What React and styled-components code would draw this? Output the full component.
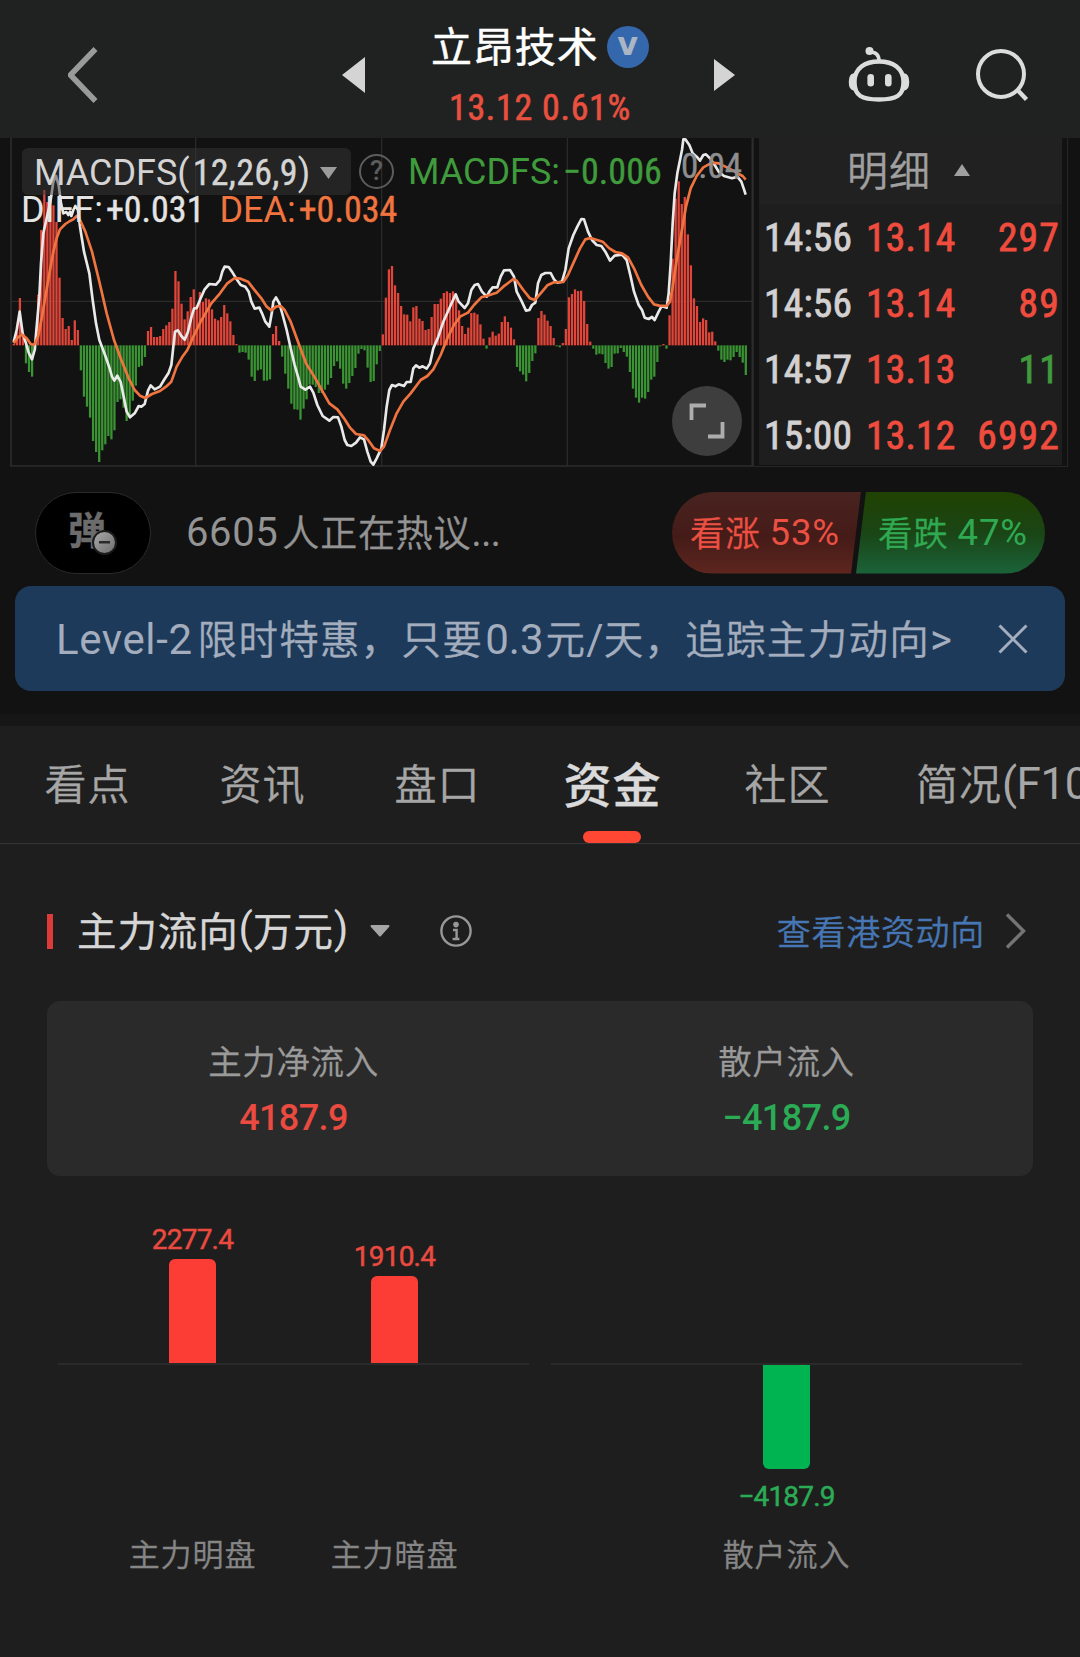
import React from 'react';
import styled, { createGlobalStyle } from 'styled-components';

const RED = '#f04c3e';
const GREEN = '#3f9b3c';

// histogram of the MACD, one value per minute
const histogram = [
    4, 40, 142, 30, -54, -80, -94, -15, 152, 346, 466, 430, 445, 420, 370, 203, 82, 49, 58, 16,
    75, 46, -75, -154, -184, -217, -287, -320, -350, -315, -297, -272, -282, -255, -170, -162, -187, -227, -212, -166,
    -121, -65, -61, -35, 43, 55, 25, 25, 28, 49, 60, 70, 110, 223, 192, 125, 78, 102, 145, 168,
    120, 160, 130, 141, 138, 108, 80, 75, 85, 121, 96, 72, 31, 4, -22, -20, -22, -43, -94, -107,
    -75, -72, -106, -106, -102, 34, 58, 13, -34, -85, -130, -175, -192, -193, -223, -190, -162, -118, -118, -125,
    -143, -143, -133, -118, -98, -62, -48, -70, -115, -130, -113, -92, -68, -25, -11, -15, -67, -110, -107, -57,
    -17, 33, 143, 228, 238, 180, 157, 118, 93, 92, 72, 114, 118, 80, 73, 46, 49, 85, 124, 124,
    140, 157, 162, 157, 162, 150, 105, 58, 34, 53, 97, 98, 93, 63, 20, -10, 24, 41, 29, 35,
    70, 87, 70, 53, 18, -65, -78, -88, -108, -83, -47, -24, 82, 103, 92, 74, 58, 22, -3, -6,
    7, 49, 144, 154, 168, 163, 164, 133, 64, 11, -10, -28, -25, -27, -53, -70, -65, -25, -24, -8,
    -20, -34, -80, -130, -157, -172, -157, -160, -140, -103, -94, -50, -3, 4, -10, 90, 260, 440, 492, 424,
    445, 333, 240, 141, 118, 70, 81, 76, 39, 41, 12, -16, -43, -50, -43, -45, -35, -20, -35, -52,
    -89,
];

const diffLine = '41,636 50,600 59,545 68,610 78,640 86,668 96,688 104,660 110,590 118,500 123,400 130,310 140,265 152,210 160,155 168,138 176,165 183,220 190,250 199,246 205,255 210,245 214,258 220,240 226,228 234,240 240,290 252,365 268,430 278,510 288,580 298,630 314,672 328,712 336,740 343,752 352,737 362,756 372,805 380,845 390,862 404,850 416,828 424,830 434,822 444,782 452,766 464,778 480,770 492,750 506,728 514,705 520,650 525,605 534,601 544,618 554,629 564,605 574,562 582,536 590,534 602,505 614,478 628,462 648,464 660,450 667,425 674,410 686,411 696,425 710,448 722,465 736,470 746,485 754,515 764,536 778,533 786,550 796,575 808,590 816,545 820,515 828,502 838,520 848,555 860,600 872,655 884,705 894,740 902,770 916,779 930,770 940,788 952,825 968,858 988,872 1000,861 1014,862 1024,890 1034,930 1042,945 1054,948 1068,938 1080,922 1092,928 1102,965 1112,995 1120,1004 1130,985 1144,955 1152,900 1160,830 1168,780 1176,765 1186,769 1196,763 1212,768 1220,756 1232,756 1240,715 1248,706 1258,713 1268,709 1280,716 1290,700 1300,655 1315,620 1330,575 1350,530 1367,493 1376,515 1394,534 1404,520 1414,480 1424,465 1434,462 1446,485 1460,500 1468,485 1478,472 1492,472 1502,440 1512,421 1530,420 1542,440 1550,485 1564,512 1578,542 1588,540 1596,525 1606,518 1614,460 1624,435 1636,429 1652,429 1662,448 1672,458 1686,455 1696,420 1706,355 1720,315 1732,290 1744,267 1752,268 1764,305 1776,330 1790,345 1804,348 1816,365 1830,392 1844,377 1866,374 1880,390 1892,440 1902,485 1916,525 1926,540 1934,563 1946,567 1956,561 1964,570 1976,545 1984,530 1992,530 2000,533 2006,490 2012,400 2018,280 2024,190 2032,130 2040,90 2046,60 2050,28 2056,28 2068,45 2078,70 2090,80 2100,92 2110,75 2118,73 2130,85 2144,105 2156,125 2172,138 2196,145 2212,140 2224,155 2232,178 2237,194';

const deaLine = '41,640 54,622 66,614 80,625 92,642 102,645 114,620 126,560 138,490 150,420 160,365 170,325 180,298 196,282 210,273 220,268 230,258 240,270 256,305 276,365 298,455 320,550 342,630 364,690 386,745 404,780 420,797 436,804 456,792 480,783 498,770 514,755 530,710 546,682 562,660 580,620 602,575 634,520 660,490 682,460 704,444 722,446 744,455 762,478 784,505 800,530 814,541 828,530 842,528 854,540 872,575 894,635 918,700 946,745 968,785 988,820 1012,838 1032,865 1050,893 1068,912 1092,916 1106,932 1122,955 1140,963 1152,950 1170,900 1190,850 1210,815 1232,790 1262,750 1282,738 1300,718 1322,675 1342,625 1362,585 1380,560 1404,548 1422,525 1444,502 1462,497 1490,488 1510,470 1540,447 1550,452 1570,480 1590,505 1604,510 1622,490 1642,466 1662,457 1690,456 1704,435 1722,395 1740,355 1756,328 1772,324 1808,335 1828,355 1846,366 1866,370 1884,382 1902,415 1924,465 1944,500 1962,523 1978,527 2000,528 2010,515 2018,470 2030,390 2044,310 2058,230 2072,175 2090,138 2110,112 2136,98 2156,100 2176,110 2200,122 2216,132 2228,138 2237,149';

const trades = [
    { time: '14:56', price: '13.14', volume: '297', color: RED },
    { time: '14:56', price: '13.14', volume: '89', color: RED },
    { time: '14:57', price: '13.13', volume: '11', color: GREEN },
    { time: '15:00', price: '13.12', volume: '6992', color: RED },
];

const tabs = ['看点', '资讯', '盘口', '资金', '社区'];

const Header = () => (
    <TopBar>
        <BackIcon width="30" height="56" viewBox="0 0 30 56">
            <path d="M27.5 2 L2.5 28 L27.5 54" fill="none" stroke="#9a9a9a" strokeWidth="5.6" />
        </BackIcon>
        <PrevIcon width="23" height="36" viewBox="0 0 23 36">
            <path d="M23 0 V36 L0 18 Z" fill="#d4d4d4" />
        </PrevIcon>
        <StockBlock>
            <StockName>立昂技术<Verified>v</Verified></StockName>
            <StockPrice>13.12 0.61%</StockPrice>
        </StockBlock>
        <NextIcon width="21" height="32" viewBox="0 0 21 32">
            <path d="M0 0 V32 L21 16 Z" fill="#d4d4d4" />
        </NextIcon>
        <RobotIcon width="62" height="58" viewBox="0 0 62 58">
            <path d="M31 15.5 C45 15.5 55.5 22 55.5 36 C55.5 50 48 53.5 31 53.5 C14 53.5 6.5 50 6.5 36 C6.5 22 17 15.5 31 15.5 Z" fill="none" stroke="#dcdcdc" strokeWidth="4.4" />
            <path d="M6 28 C0 29 0 43 6 44 Z M56 28 C62 29 62 43 56 44 Z" fill="#dcdcdc" stroke="#dcdcdc" strokeWidth="1.5" />
            <path d="M22 6 C28 6 31 9 31 15" fill="none" stroke="#dcdcdc" strokeWidth="3.6" />
            <circle cx="21.5" cy="5" r="4" fill="#dcdcdc" />
            <rect x="19.4" y="28" width="6.6" height="12.5" rx="3.3" fill="#dcdcdc" />
            <rect x="37" y="28" width="6.6" height="12.5" rx="3.3" fill="#dcdcdc" />
        </RobotIcon>
        <SearchIcon width="56" height="56" viewBox="0 0 56 56">
            <circle cx="27" cy="27" r="23" fill="none" stroke="#dcdcdc" strokeWidth="4" />
            <path d="M43.5 43 L52.5 52.5" stroke="#dcdcdc" strokeWidth="4.4" />
        </SearchIcon>
    </TopBar>
);

const MacdChart = () => (
    <ChartPane>
        <svg width="753" height="329" viewBox="0 24 2259 987">
            <g stroke="#2c2c2c">
                <path d="M33 24 V1008 M2257 24 V1008 M31 1008 H2259" strokeWidth="5" fill="none" />
                <path d="M587 24 V1008 M1145 24 V1008 M1702 24 V1008 M31 514 H2259" strokeWidth="3.5" fill="none" />
            </g>
            {histogram.map((v, i) => (
                <rect
                    key={i}
                    x={38 + i * 9.15}
                    y={v > 0 ? 646 - v : 646}
                    width="6.8"
                    height={Math.abs(v)}
                    fill={v > 0 ? '#e2463a' : '#3a9433'}
                />
            ))}
            <polyline points={diffLine} fill="none" stroke="#e9e9e9" strokeWidth="8" strokeLinejoin="round" />
            <polyline points={deaLine} fill="none" stroke="#f0743f" strokeWidth="8" strokeLinejoin="round" />
        </svg>
        <Legend>
            <IndicatorButton>
                <Latin>MACDFS(</Latin><Digits>12,26,9</Digits><Latin>)</Latin>
                <svg width="17" height="12" viewBox="0 0 17 12"><path d="M0 0 H17 L8.5 12 Z" fill="#9c9c9c" /></svg>
            </IndicatorButton>
            <Help>?</Help>
            <MacdValue><Latin>MACDFS:</Latin><Digits>−0.006</Digits></MacdValue>
        </Legend>
        <Values>
            <DiffValue><Latin>DIFF:</Latin><Digits>+0.031</Digits></DiffValue>
            <DeaValue><Latin>DEA:</Latin><Digits>+0.034</Digits></DeaValue>
        </Values>
        <MaxLabel>0.04</MaxLabel>
        <ExpandButton>
            <svg width="38" height="38" viewBox="0 0 38 38">
                <path d="M3.5 18 V3.5 H18 M20 34.5 H34.5 V20" fill="none" stroke="#adadad" strokeWidth="3.8" />
            </svg>
        </ExpandButton>
    </ChartPane>
);

const TradeList = () => (
    <TradePane>
        <TradeInner>
            <TradeHeader>
                明细
                <svg width="16" height="12" viewBox="0 0 16 12"><path d="M8 0 L16 12 H0 Z" fill="#a0a0a0" /></svg>
            </TradeHeader>
            {trades.map((t, i) => (
                <TradeRow key={i}>
                    <TradeTime>{t.time}</TradeTime>
                    <TradePrice>{t.price}</TradePrice>
                    <TradeVolume $color={t.color}>{t.volume}</TradeVolume>
                </TradeRow>
            ))}
        </TradeInner>
    </TradePane>
);

const FlowItem = ({ label, value, height, negative }) => (
    <FlowColumn>
        <FlowUp>
            {!negative && <><FlowValue $color="#ea4a3f">{value}</FlowValue><FlowBar style={{ height }} /></>}
        </FlowUp>
        <FlowDown>
            {negative && <><FlowBar $negative style={{ height }} /><FlowValue $color="#2bab55">{value}</FlowValue></>}
        </FlowDown>
        <FlowLabel>{label}</FlowLabel>
    </FlowColumn>
);

const App = () => {
    return (
        <>
            <GlobalStyle />
            <Page>
                <Header />
                <MarketRow>
                    <MacdChart />
                    <TradeList />
                </MarketRow>

                <DiscussRow>
                    <DanmuButton>
                        弹
                        <MinusDot />
                    </DanmuButton>
                    <DiscussText><Count>6605</Count>人正在热议<Dots>...</Dots></DiscussText>
                    <Poll>
                        <Bull>看涨<PollNumber>53%</PollNumber></Bull>
                        <Bear>看跌<PollNumber>47%</PollNumber></Bear>
                    </Poll>
                </DiscussRow>

                <Banner>
                    <BannerText>
                        <Level>Level-2</Level>限时特惠，只要<Price>0.3</Price>元<b>/</b>天，追踪主力动向<b>&gt;</b>
                    </BannerText>
                    <svg width="30" height="30" viewBox="0 0 30 30">
                        <path d="M1.5 1.5 L28.5 28.5 M28.5 1.5 L1.5 28.5" stroke="#a3adbd" strokeWidth="3" />
                    </svg>
                </Banner>

                <Content>
                    <TabBar>
                        {tabs.map(t => <Tab key={t} $active={t === '资金'}>{t}</Tab>)}
                        <Tab>简况<b>(F10)</b></Tab>
                    </TabBar>

                    <SectionHead>
                        <SectionTitle>主力流向<b>(</b>万元<b>)</b></SectionTitle>
                        <CaretIcon width="20" height="12" viewBox="0 0 20 12">
                            <path d="M1.5 1 H18.5 L10 10.5 Z" fill="#a5a5a5" stroke="#a5a5a5" strokeWidth="2" strokeLinejoin="round" />
                        </CaretIcon>
                        <svg width="32" height="32" viewBox="0 0 32 32">
                            <circle cx="16" cy="16" r="14.6" fill="none" stroke="#989898" strokeWidth="2.4" />
                            <circle cx="16" cy="9.6" r="2.8" fill="#989898" />
                            <path d="M13 15 H16.6 V24 M12.6 24 H19.4" fill="none" stroke="#989898" strokeWidth="2.4" />
                        </svg>
                        <SectionLink>查看港资动向</SectionLink>
                        <svg width="22" height="36" viewBox="0 0 22 36">
                            <path d="M2 1.5 L18.5 18 L2 34.5" fill="none" stroke="#747474" strokeWidth="3.4" />
                        </svg>
                    </SectionHead>

                    <Summary>
                        <SummaryItem>
                            主力净流入
                            <SummaryValue $color="#ea4a3f">4187.9</SummaryValue>
                        </SummaryItem>
                        <SummaryItem>
                            散户流入
                            <SummaryValue $color="#2bab55">−4187.9</SummaryValue>
                        </SummaryItem>
                    </Summary>

                    <FlowCharts>
                        <FlowGroup>
                            <FlowItem label="主力明盘" value="2277.4" height={104} />
                            <FlowItem label="主力暗盘" value="1910.4" height={87} />
                        </FlowGroup>
                        <FlowGroup>
                            <FlowItem label="散户流入" value="−4187.9" height={104} negative />
                        </FlowGroup>
                    </FlowCharts>
                </Content>
            </Page>
        </>
    );
};

const GlobalStyle = createGlobalStyle`
  * {
    box-sizing: border-box;
  }
  body {
    margin: 0;
    background: #1e1e1e;
    font-family: "Noto Sans CJK SC", sans-serif;
  }
  svg {
    display: block;
    flex: none;
  }
`

const Page = styled.div`
  width: 1080px;
  height: 1657px;
  overflow: hidden;
  display: flex;
  flex-direction: column;
  background: #121212;
  font-weight: 350;
  line-height: 1;
  white-space: nowrap;
  -webkit-text-stroke: 0.35px currentColor;

  b {
    font-family: Roboto, sans-serif;
    font-weight: 400;
    letter-spacing: 0;
    -webkit-text-stroke: 0;
  }
`

const TopBar = styled.div`
  height: 138px;
  flex: none;
  display: flex;
  align-items: center;
  padding-top: 12px;
  background: #202222;
`

const BackIcon = styled.svg`
  margin-left: 68px;
`

const PrevIcon = styled.svg`
  margin-left: 244px;
`

const NextIcon = styled.svg`
  margin-left: 65px;
`

const RobotIcon = styled.svg`
  margin: 0 0 0 113px;
`

const SearchIcon = styled.svg`
  margin-left: 64px;
`

const StockBlock = styled.div`
  width: 218px;
  margin-left: 66px;
  align-self: stretch;
  display: flex;
  flex-direction: column;
`

const StockName = styled.div`
  height: 70px;
  padding-bottom: 5px;
  display: flex;
  align-items: center;
  color: #fff;
  font-size: 41px;
  font-weight: 400;
  letter-spacing: 0.9px;
  -webkit-text-stroke: 0.5px #fff;
`

const Verified = styled.span`
  width: 42px;
  height: 42px;
  margin: 5px 0 0 8px;
  flex: none;
  border-radius: 50%;
  background: #3467ac;
  color: #aab5c5;
  font: bold 32px/36px "DejaVu Sans", sans-serif;
  letter-spacing: 0;
  text-align: center;
  -webkit-text-stroke: 0;
`

const Digits = styled.span`
  display: inline-block;
  font-family: "Roboto Condensed", Roboto, sans-serif;
  font-weight: 400;
  font-size: 36px;
  -webkit-text-stroke: 0.4px currentColor;
`

const StockPrice = styled(Digits)`
  height: 51px;
  line-height: 53px;
  text-align: center;
  color: #e8503f;
  letter-spacing: 0.7px;
  -webkit-text-stroke: 0.6px currentColor;
`

const MarketRow = styled.div`
  display: flex;
  height: 329px;
  flex: none;
`

const ChartPane = styled.div`
  position: relative;
  width: 753px;
`

const Legend = styled.div`
  position: absolute;
  left: 22px;
  top: 10px;
  display: flex;
  align-items: center;
`

const Latin = styled.span`
  display: inline-block;
  margin-right: 3px;
  font-family: Roboto, sans-serif;
  font-weight: 400;
  font-size: 36px;
  -webkit-text-stroke: 0;
`

const IndicatorButton = styled.div`
  width: 329px;
  height: 47px;
  padding: 2px 14px 0 12px;
  display: flex;
  align-items: center;
  border-radius: 6px;
  background: rgba(54, 54, 54, 0.5);
  color: #d4d4d4;

  ${Digits} {
    letter-spacing: 0.3px;
  }

  svg {
    margin-left: auto;
  }
`

const Help = styled.span`
  width: 35px;
  height: 35px;
  margin-left: 8px;
  border: 2.5px solid #5c5c5c;
  border-radius: 50%;
  color: #5c5c5c;
  font: 500 27px/30px Roboto, sans-serif;
  text-align: center;
  -webkit-text-stroke: 0;
`

const MacdValue = styled.span`
  margin-left: 14px;
  color: ${GREEN};
`

const Values = styled.div`
  position: absolute;
  left: 21px;
  top: 54px;
  display: flex;
  gap: 15px;
`

const DiffValue = styled.span`
  color: #e4e4e4;
`

const DeaValue = styled.span`
  color: #f0743f;
`

const MaxLabel = styled(Digits)`
  position: absolute;
  right: 11px;
  top: 11px;
  color: #8e8e8e;
  font-size: 35px;
`

const ExpandButton = styled.div`
  position: absolute;
  right: 11px;
  bottom: 11px;
  width: 70px;
  height: 70px;
  display: flex;
  align-items: center;
  justify-content: center;
  border-radius: 50%;
  background: #3e3e3e;
`

const TradePane = styled.div`
  width: 315px;
  padding: 0 5px;
  border: 1px solid #262626;
  border-top: none;
  overflow: hidden;
`

const TradeInner = styled.div`
  height: 327px;
  overflow: hidden;
  background: #1e1e1e;
`

const TradeHeader = styled.div`
  height: 66px;
  display: flex;
  align-items: center;
  padding: 0 0 6px 88px;
  background: #212121;
  color: #a0a0a0;
  font-size: 41px;
  letter-spacing: 1px;

  svg {
    margin: 3px 0 0 23px;
  }
`

const TradeRow = styled.div`
  height: 66px;
  display: flex;
  align-items: center;
  padding: 2px 2px 0 5px;
`

const TradeCell = styled(Digits)`
  font-size: 39.5px;
  letter-spacing: 0.2px;
  -webkit-text-stroke: 0.8px currentColor;
`

const TradeTime = styled(TradeCell)`
  width: 102px;
  color: #d2d0d0;
`

const TradePrice = styled(TradeCell)`
  color: ${RED};
`

const TradeVolume = styled(TradeCell)`
  margin-left: auto;
  color: ${p => p.$color};
  letter-spacing: 1.2px;
`

const DiscussRow = styled.div`
  height: 119px;
  flex: none;
  display: flex;
  align-items: center;
  padding: 14px 35px 2px;
`

const DanmuButton = styled.div`
  position: relative;
  width: 116px;
  height: 82px;
  padding: 5px 0 0 32px;
  border: 1px solid #2a2a2a;
  border-radius: 41px;
  background: #000;
  color: #6c6c6c;
  font-size: 38px;
  font-weight: 700;
  line-height: 60px;
`

const MinusDot = styled.span`
  position: absolute;
  left: 56px;
  top: 37px;
  width: 25px;
  height: 25px;
  border: 2px solid #1c1c1c;
  border-radius: 50%;
  background: linear-gradient(#2a2a2a, #2a2a2a) center / 11px 2.5px no-repeat, linear-gradient(135deg, #a8a8a8, #6e6e6e);
`

const DiscussText = styled.div`
  margin-left: 35px;
  padding-bottom: 3px;
  display: flex;
  align-items: center;
  color: #949494;
  font-size: 37px;
  letter-spacing: 0.8px;
`

const Count = styled.span`
  margin: 3px 4px 0 0;
  font-family: Roboto, sans-serif;
  font-weight: 400;
  font-size: 40px;
  letter-spacing: 0.6px;
  -webkit-text-stroke: 0;
`

const Dots = styled(Count)`
  margin-right: 0;
  letter-spacing: -1px;
`

const Poll = styled.div`
  margin-left: auto;
  display: flex;
`

const PollSide = styled.div`
  width: 189px;
  height: 82px;
  padding-bottom: 3px;
  display: flex;
  align-items: center;
  font-size: 34.5px;
  letter-spacing: 0.8px;
`

const Bull = styled(PollSide)`
  padding-left: 18px;
  border-radius: 41px 0 0 41px;
  clip-path: polygon(0 0, 100% 0, calc(100% - 10px) 100%, 0 100%);
  background: linear-gradient(#48231f, #451b18 55%, #5e261f);
  color: #ec5043;
`

const Bear = styled(PollSide)`
  margin-left: -5px;
  padding-left: 22px;
  border-radius: 0 41px 41px 0;
  clip-path: polygon(10px 0, 100% 0, 100% 100%, 0 100%);
  background: linear-gradient(#204202, #1a4515 50%, #1b633a);
  color: #30a953;
`

const PollNumber = styled.span`
  margin: 4px 0 0 9px;
  font-family: Roboto, sans-serif;
  font-weight: 400;
  font-size: 36.5px;
  letter-spacing: 0.8px;
  -webkit-text-stroke: 0;
`

const Banner = styled.div`
  height: 105px;
  flex: none;
  margin: 0 15px;
  padding: 0 37px 0 41px;
  display: flex;
  align-items: center;
  justify-content: space-between;
  border-radius: 16px;
  background: #1e3a5a;
`

const BannerText = styled.div`
  color: #a3adbd;
  font-size: 39.5px;
  letter-spacing: 1.3px;

  b {
    font-size: 42px;
  }
`

const Level = styled.b`
  margin-right: 5px;
  && {
    letter-spacing: 0.6px;
  }
`

const Price = styled.b`
  margin: 0 2px;
`

const Content = styled.div`
  flex: 1;
  margin-top: 23px;
  border-top: 12px solid #161616;
  background: #1e1e1e;
`

const TabBar = styled.div`
  height: 118px;
  display: flex;
  border-bottom: 1px solid #343434;
`

const Tab = styled.div`
  position: relative;
  width: 175px;
  flex: none;
  padding-bottom: 5px;
  display: flex;
  align-items: center;
  justify-content: center;
  color: ${p => p.$active ? '#dadada' : '#a6a6a6'};
  font-size: ${p => p.$active ? '48px' : '42px'};
  font-weight: ${p => p.$active ? 500 : 350};
  letter-spacing: 1px;

  &:last-child {
    margin-left: 41px;
    justify-content: flex-start;
  }

  b {
    margin-top: 4px;
    font-size: 44px;
    letter-spacing: -0.5px;
  }

  &::after {
    content: '';
    display: ${p => p.$active ? 'block' : 'none'};
    position: absolute;
    bottom: 0;
    width: 58px;
    height: 12px;
    margin-right: 2px;
    border-radius: 6px;
    background: #ff4733;
  }
`

const SectionHead = styled.div`
  height: 157px;
  display: flex;
  align-items: center;
  padding: 17px 53px 0 47px;
`

const SectionTitle = styled.div`
  display: flex;
  align-items: center;
  padding-bottom: 4px;
  color: #d6d6d6;
  font-size: 39.5px;
  font-weight: 400;
  letter-spacing: 0.9px;

  b {
    font-size: 42px;
  }

  &::before {
    content: '';
    width: 6px;
    height: 35px;
    margin: 4px 24px 0 0;
    background: #dc3b39;
  }
`

const CaretIcon = styled.svg`
  margin: 0 50px 0 22px;
`

const SectionLink = styled.span`
  margin: 0 20px 0 auto;
  padding-bottom: 1px;
  color: #4676b3;
  font-size: 34px;
  letter-spacing: 0.7px;
`

const Summary = styled.div`
  height: 175px;
  margin: 0 47px;
  display: flex;
  border-radius: 13px;
  background: #2a2a2a;
`

const SummaryItem = styled.div`
  flex: 1;
  display: flex;
  flex-direction: column;
  align-items: center;
  padding-top: 42px;
  color: #9a9a9a;
  font-size: 33.5px;
  letter-spacing: 0.6px;
`

const SummaryValue = styled.span`
  margin-top: 21px;
  color: ${p => p.$color};
  font: 500 36px/40px Roboto, sans-serif;
  letter-spacing: -0.6px;
  -webkit-text-stroke: 0;
`

const FlowCharts = styled.div`
  display: flex;
  gap: 22px;
  margin: 0 58px;
`

const FlowGroup = styled.div`
  flex: 1;
  display: flex;
  justify-content: center;
  background: linear-gradient(#2a2a2a, #2a2a2a) 0 187px / 100% 2px no-repeat;
`

const FlowColumn = styled.div`
  width: 202px;
  display: flex;
  flex-direction: column;
  align-items: center;
`

const FlowUp = styled.div`
  height: 187px;
  display: flex;
  flex-direction: column;
  align-items: center;
  justify-content: flex-end;
  gap: 4px;
`

const FlowDown = styled.div`
  height: 174px;
  padding-top: 2px;
  display: flex;
  flex-direction: column;
  align-items: center;
  gap: 13px;
`

const FlowBar = styled.div`
  width: 47px;
  border-radius: ${p => p.$negative ? '0 0 6px 6px' : '6px 6px 0 0'};
  background: ${p => p.$negative ? '#00b551' : '#fc3d35'};
`

const FlowValue = styled.span`
  color: ${p => p.$color};
  font: 400 28px/30px Roboto, sans-serif;
  letter-spacing: -0.8px;
  -webkit-text-stroke: 0.5px currentColor;
`

const FlowLabel = styled.span`
  color: #868686;
  font-size: 31px;
  letter-spacing: 0.9px;
`

export default App;
